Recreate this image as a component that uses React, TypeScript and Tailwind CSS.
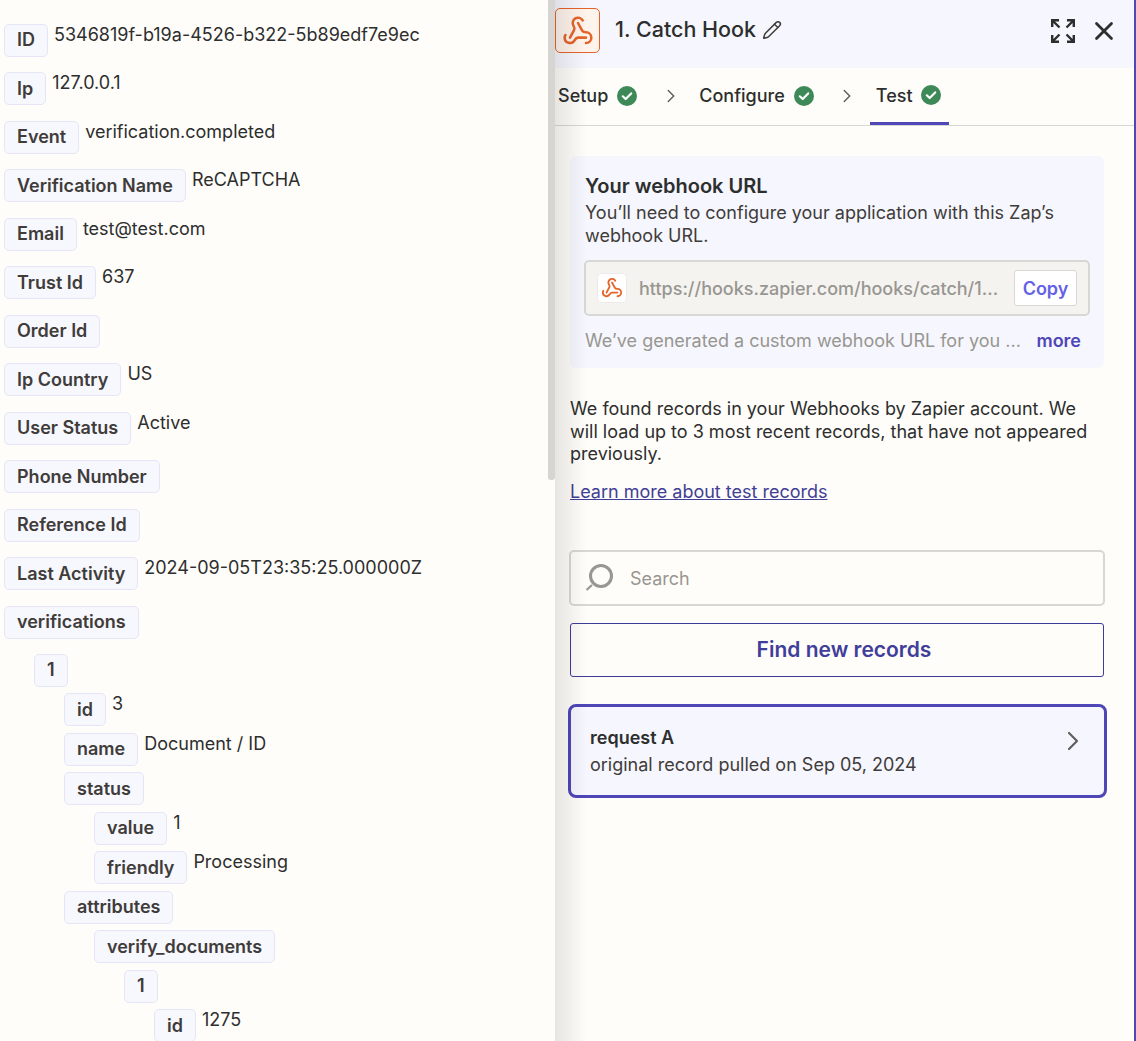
import { ChevronRight, Pencil, Webhook, X } from "lucide-react";

const font = { fontFamily: "Inter, 'Liberation Sans', sans-serif" };

function Tag({ children }: { children: React.ReactNode }) {
  return (
    <span className="shrink-0 rounded-[5px] border border-[#e6e5f7] bg-[#f7f7fe] px-3 h-[33px] flex items-center text-[18px] font-semibold text-[#403c39] leading-none">
      {children}
    </span>
  );
}

function Row({ k, v, indent = 0, tight = false }: { k: string; v?: string; indent?: 0 | 1 | 2 | 3 | 4 | 5; tight?: boolean }) {
  const pad = ["ml-0", "ml-[30px]", "ml-[60px]", "ml-[90px]", "ml-[120px]", "ml-[150px]"][indent];
  return (
    <div className={`flex items-start ${pad} ${tight ? "h-[39.5px]" : "h-[48.5px]"}`}>
      <Tag>{k}</Tag>
      {v && <span className="ml-[6px] text-[18px] leading-[22px] text-[#2d2e2e]">{v}</span>}
    </div>
  );
}

function Check() {
  return (
    <svg width="20" height="20" viewBox="0 0 20 20" className="shrink-0">
      <circle cx="10" cy="10" r="10" fill="#3d8a58" />
      <path d="M5.8 10.3 8.7 13l5.5-5.6" fill="none" stroke="#fff" strokeWidth="2.2" strokeLinecap="round" strokeLinejoin="round" />
    </svg>
  );
}

function ExpandIcon() {
  return (
    <svg width="24" height="24" viewBox="0 0 24 24" fill="none" stroke="#2d2e2e" strokeWidth="2.4" className="shrink-0">
      <path d="M1.2 8V1.2H8M1.5 1.5 8.5 8.5" />
      <path d="M22.8 8V1.2H16M22.5 1.5 15.5 8.5" />
      <path d="M1.2 16v6.8H8M1.5 22.5 8.5 15.5" />
      <path d="M22.8 16v6.8H16M22.5 22.5 15.5 15.5" />
    </svg>
  );
}

function SearchIcon() {
  return (
    <svg width="32" height="32" viewBox="0 0 32 32" fill="none" stroke="#989690" className="shrink-0">
      <circle cx="17" cy="14" r="10.5" strokeWidth="3" />
      <path d="M8 23 2.5 28" strokeWidth="2.2" />
    </svg>
  );
}

export default function App() {
  return (
    <div style={font} className="relative flex h-[1041px] w-[1136px] overflow-hidden bg-[#fffdf9]">
      <div className="relative h-full w-[555px] shrink-0 overflow-hidden pl-1 pt-[23.75px]">
        <Row k="ID" v="5346819f-b19a-4526-b322-5b89edf7e9ec" />
        <Row k="Ip" v="127.0.0.1" />
        <Row k="Event" v="verification.completed" />
        <Row k="Verification Name" v="ReCAPTCHA" />
        <Row k="Email" v="test@test.com" />
        <Row k="Trust Id" v="637" />
        <Row k="Order Id" />
        <Row k="Ip Country" v="US" />
        <Row k="User Status" v="Active" />
        <Row k="Phone Number" />
        <Row k="Reference Id" />
        <Row k="Last Activity" v="2024-09-05T23:35:25.000000Z" />
        <Row k="verifications" />
        <div className="-mt-[0.5px]">
          <Row k="1" indent={1} tight />
          <Row k="id" v="3" indent={2} tight />
          <Row k="name" v="Document / ID" indent={2} tight />
          <Row k="status" indent={2} tight />
          <Row k="value" v="1" indent={3} tight />
          <Row k="friendly" v="Processing" indent={3} tight />
          <Row k="attributes" indent={2} tight />
          <Row k="verify_documents" indent={3} tight />
          <Row k="1" indent={4} tight />
          <Row k="id" v="1275" indent={5} tight />
        </div>
        <div className="absolute right-0 top-0 h-[480px] w-[7px] rounded-b-[3px] bg-[#d6d5d1]" />
      </div>

      <div className="relative flex h-full w-[581px] shrink-0 flex-col border-r-2 border-[#4f46b8]">
        <div className="flex h-[68px] shrink-0 items-center bg-[#f6f6fe] pb-[7px] pr-[18px]">
          <div className="flex h-[45px] w-[45px] items-center justify-center rounded-[5px] border border-[#e5642a] bg-[#fff4ec]">
            <Webhook size={32} strokeWidth={1.9} color="#e5642a" />
          </div>
          <span className="mb-[1px] ml-[15px] text-[21.5px] font-medium leading-none text-[#2d2e2e]">1. Catch Hook</span>
          <Pencil size={20} strokeWidth={1.8} color="#403c39" className="mb-[1px] ml-[6px]" />
          <div className="flex-1" />
          <ExpandIcon />
          <X size={30} strokeWidth={2.2} color="#2d2e2e" className="ml-[14px] mr-[-3px]" />
        </div>

        <div className="flex h-[58px] shrink-0 items-center border-b border-[#d8d7d3] pb-[2px] pl-[3px] text-[18px] font-medium text-[#2d2e2e]">
          <span>Setup</span>
          <span className="ml-[9px]"><Check /></span>
          <ChevronRight size={22} strokeWidth={1.6} color="#5f5e5a" className="ml-[23px]" />
          <span className="ml-[17px]">Configure</span>
          <span className="ml-[9px]"><Check /></span>
          <ChevronRight size={22} strokeWidth={1.6} color="#5f5e5a" className="ml-[22px]" />
          <div className="ml-[12px] mb-[-2px] flex items-center gap-[8px] self-stretch border-b-[3px] border-[#4f46b8] pl-[6px] pr-[8px]">
            <span>Test</span>
            <Check />
          </div>
        </div>

        <div className="flex flex-1 flex-col pl-[15px] pr-[30px] pt-[30px]">
          <div className="h-[212px] rounded-[6px] bg-[#f6f6fe] px-[15px] pt-[18px]">
            <div className="text-[20px] font-semibold leading-[24px] text-[#2d2e2e]">Your webhook URL</div>
            <div className="mt-[3px] text-[18px] leading-[23px] text-[#403c39]">
              You’ll need to configure your application with this Zap’s webhook URL.
            </div>
            <div className="-mx-[1px] mt-[13px] flex h-[56px] items-center rounded-[5px] border-2 border-[#d8d7d3] bg-[#f4f3f0] pl-[11px] pr-[11px]">
              <div className="flex h-[30px] w-[30px] shrink-0 items-center justify-center rounded-[4px] border border-[#ecebe7] bg-white">
                <Webhook size={22} strokeWidth={2} color="#e5642a" />
              </div>
              <span className="ml-3 flex-1 truncate text-[18px] font-medium text-[#989690]">https://hooks.zapier.com/hooks/catch/1...</span>
              <span className="flex h-[36px] w-[63px] shrink-0 items-center justify-center rounded-[3px] border border-[#d8d7d3] bg-white text-[18px] font-semibold text-[#6461e6]">Copy</span>
            </div>
            <div className="mt-[13px] flex items-center justify-between pr-[8px] text-[18px] leading-[24px]">
              <span className="text-[#989690]">We’ve generated a custom webhook URL for you ...</span>
              <span className="font-semibold text-[#4f46b8]">more</span>
            </div>
          </div>

          <p className="mt-[30px] text-[18px] leading-[22.5px] text-[#2d2e2e]">
            We found records in your Webhooks by Zapier account. We will load up to 3 most recent records, that have not appeared previously.
          </p>
          <a className="mt-[15px] text-[18px] leading-[22px] text-[#3f3f96] underline">Learn more about test records</a>

          <div className="-ml-[1px] -mr-[1px] mt-[47.5px] flex h-[56px] items-center rounded-[5px] border-2 border-[#d8d7d3] px-[13px]">
            <SearchIcon />
            <span className="ml-[14px] text-[18px] text-[#989690]">Search</span>
          </div>

          <div className="mt-[17px] flex h-[54px] items-center justify-center rounded-[3px] border border-[#3d3d99] pl-[14px] text-[21px] font-semibold text-[#403e9a]">
            Find new records
          </div>

          <div className="-ml-[2px] -mr-[3px] mt-[27px] flex h-[94px] items-start justify-between rounded-[8px] border-[3px] border-[#4f46b8] bg-[#f6f6fe] pl-[19px] pr-[15px] pt-[18px]">
            <div className="text-[#2d2e2e]">
              <div className="text-[18px] font-semibold leading-[26px]">request A</div>
              <div className="text-[18px] leading-[27px] text-[#403c39]">original record pulled on Sep 05, 2024</div>
            </div>
            <ChevronRight size={32} strokeWidth={1.6} color="#5f5e5a" />
          </div>
        </div>

        <div className="pointer-events-none absolute inset-y-0 left-0 w-[32px] bg-gradient-to-r from-[#00000018] to-transparent" />
      </div>
    </div>
  );
}
